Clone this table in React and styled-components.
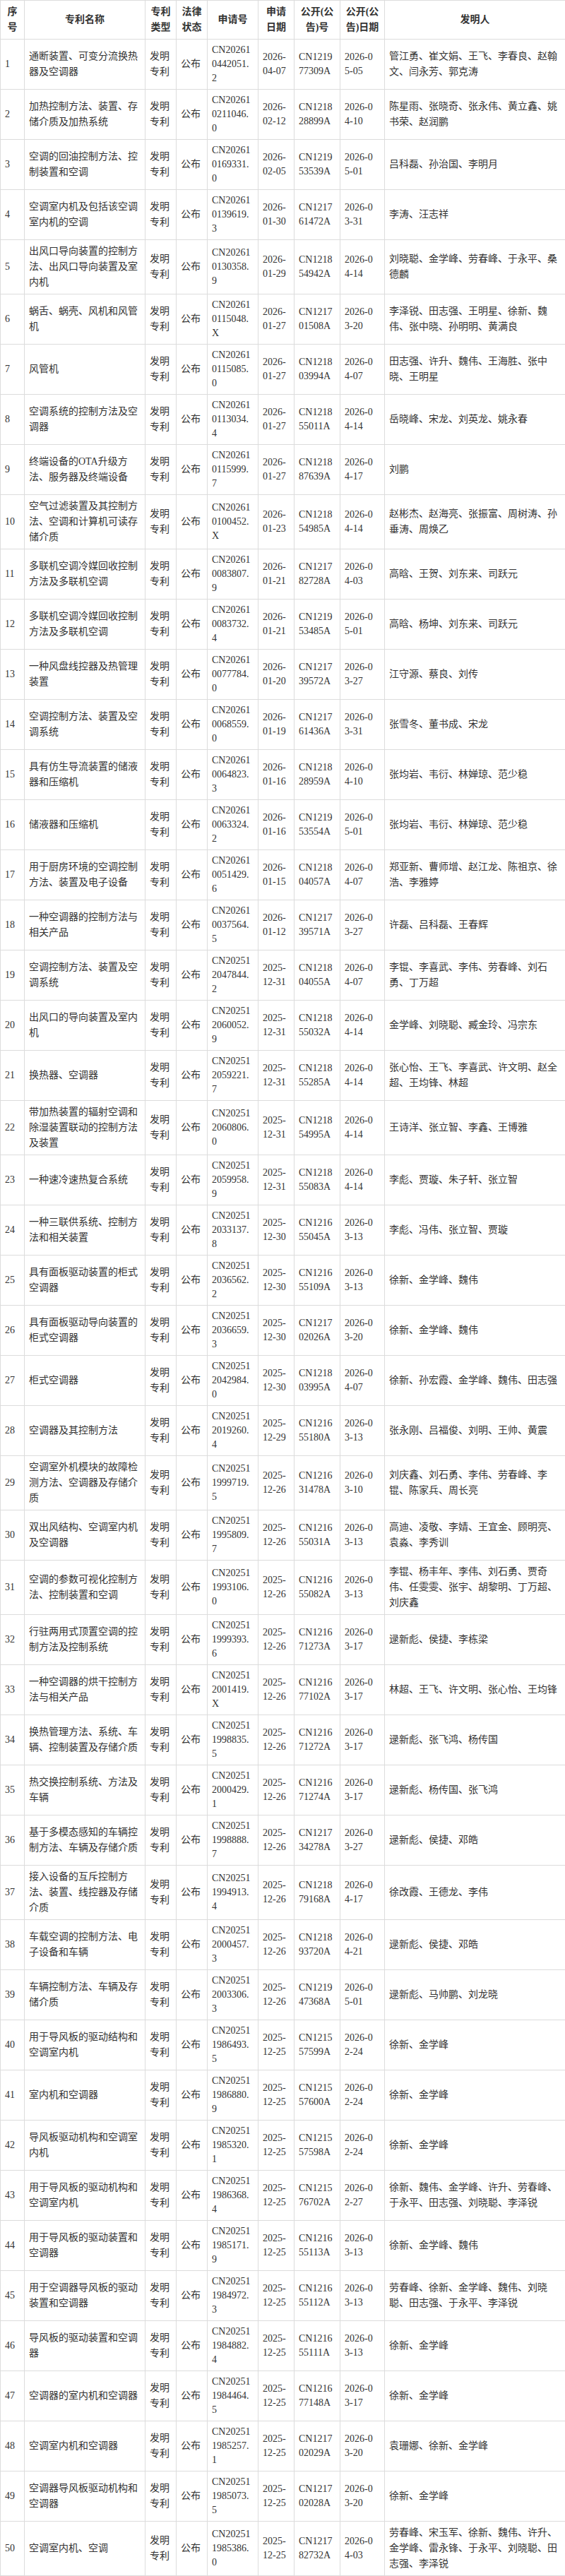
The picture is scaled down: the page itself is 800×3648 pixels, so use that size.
import React from 'react';
import styled, { createGlobalStyle } from 'styled-components';

const GlobalStyle = createGlobalStyle`
  body {
    margin: 0;
    background: #fff;
    color: #333;
    font-family: "Liberation Serif", "Noto Sans CJK SC", serif;
    font-size: 14px;
  }
`;

const Table = styled.table`
  width: 800px;
  border-collapse: collapse;
  table-layout: fixed;
`;

const HeadCell = styled.th`
  border: 1px solid #dcdcdc;
  padding: 5px 6px;
  font-weight: bold;
  line-height: 22px;
  text-align: center;
  vertical-align: middle;
  color: #333;
`;

const Cell = styled.td`
  border: 1px solid #dcdcdc;
  padding: 5px 6px;
  line-height: ${props => (props.$latin ? '20px' : '22px')};
  text-align: left;
  vertical-align: middle;
  color: #333;
`;

const Line = styled.span`
  display: block;
  white-space: nowrap;
`;

const columns = [
  { title: '序号', width: 34 },
  { title: '专利名称', width: 171 },
  { title: '专利类型', width: 44 },
  { title: '法律状态', width: 44 },
  { title: '申请号', width: 72 },
  { title: '申请日期', width: 51 },
  { title: '公开(公告)号', width: 65 },
  { title: '公开(公告)日期', width: 63 },
  { title: '发明人', width: 256 },
];

// [名称, 申请号, 申请日, 公开号, 公开日, 发明人]
const patents = [
  ['通断装置、可变分流换热器及空调器', 'CN202610442051.2', '2026-04-07', 'CN121977309A', '2026-05-05', '管江勇、崔文娟、王飞、李春良、赵翰文、闫永芳、郭克涛'],
  ['加热控制方法、装置、存储介质及加热系统', 'CN202610211046.0', '2026-02-12', 'CN121828899A', '2026-04-10', '陈星雨、张晓奇、张永伟、黄立鑫、姚书荣、赵润鹏'],
  ['空调的回油控制方法、控制装置和空调', 'CN202610169331.0', '2026-02-05', 'CN121953539A', '2026-05-01', '吕科磊、孙治国、李明月'],
  ['空调室内机及包括该空调室内机的空调', 'CN202610139619.3', '2026-01-30', 'CN121761472A', '2026-03-31', '李涛、汪志祥'],
  ['出风口导向装置的控制方法、出风口导向装置及室内机', 'CN202610130358.9', '2026-01-29', 'CN121854942A', '2026-04-14', '刘晓聪、金学峰、劳春峰、于永平、桑德麟'],
  ['蜗舌、蜗壳、风机和风管机', 'CN202610115048.X', '2026-01-27', 'CN121701508A', '2026-03-20', '李泽锐、田志强、王明星、徐新、魏伟、张中晓、孙明明、黄满良'],
  ['风管机', 'CN202610115085.0', '2026-01-27', 'CN121803994A', '2026-04-07', '田志强、许升、魏伟、王海胜、张中晓、王明星'],
  ['空调系统的控制方法及空调器', 'CN202610113034.4', '2026-01-27', 'CN121855011A', '2026-04-14', '岳晓峰、宋龙、刘英龙、姚永春'],
  ['终端设备的OTA升级方法、服务器及终端设备', 'CN202610115999.7', '2026-01-27', 'CN121887639A', '2026-04-17', '刘鹏'],
  ['空气过滤装置及其控制方法、空调和计算机可读存储介质', 'CN202610100452.X', '2026-01-23', 'CN121854985A', '2026-04-14', '赵彬杰、赵海亮、张振富、周树涛、孙垂涛、周焕乙'],
  ['多联机空调冷媒回收控制方法及多联机空调', 'CN202610083807.9', '2026-01-21', 'CN121782728A', '2026-04-03', '高晗、王贺、刘东来、司跃元'],
  ['多联机空调冷媒回收控制方法及多联机空调', 'CN202610083732.4', '2026-01-21', 'CN121953485A', '2026-05-01', '高晗、杨坤、刘东来、司跃元'],
  ['一种风盘线控器及热管理装置', 'CN202610077784.0', '2026-01-20', 'CN121739572A', '2026-03-27', '江守源、蔡良、刘传'],
  ['空调控制方法、装置及空调系统', 'CN202610068559.0', '2026-01-19', 'CN121761436A', '2026-03-31', '张雪冬、董书成、宋龙'],
  ['具有仿生导流装置的储液器和压缩机', 'CN202610064823.3', '2026-01-16', 'CN121828959A', '2026-04-10', '张均岩、韦衍、林婵琼、范少稳'],
  ['储液器和压缩机', 'CN202610063324.2', '2026-01-16', 'CN121953554A', '2026-05-01', '张均岩、韦衍、林婵琼、范少稳'],
  ['用于厨房环境的空调控制方法、装置及电子设备', 'CN202610051429.6', '2026-01-15', 'CN121804057A', '2026-04-07', '郑亚新、曹师增、赵江龙、陈祖京、徐浩、李雅婷'],
  ['一种空调器的控制方法与相关产品', 'CN202610037564.5', '2026-01-12', 'CN121739571A', '2026-03-27', '许磊、吕科磊、王春辉'],
  ['空调控制方法、装置及空调系统', 'CN202512047844.2', '2025-12-31', 'CN121804055A', '2026-04-07', '李锟、李喜武、李伟、劳春峰、刘石勇、丁万超'],
  ['出风口的导向装置及室内机', 'CN202512060052.9', '2025-12-31', 'CN121855032A', '2026-04-14', '金学峰、刘晓聪、臧金玲、冯宗东'],
  ['换热器、空调器', 'CN202512059221.7', '2025-12-31', 'CN121855285A', '2026-04-14', '张心怡、王飞、李喜武、许文明、赵全超、王均锋、林超'],
  ['带加热装置的辐射空调和除湿装置联动的控制方法及装置', 'CN202512060806.0', '2025-12-31', 'CN121854995A', '2026-04-14', '王诗洋、张立智、李鑫、王博雅'],
  ['一种速冷速热复合系统', 'CN202512059958.9', '2025-12-31', 'CN121855083A', '2026-04-14', '李彪、贾璇、朱子轩、张立智'],
  ['一种三联供系统、控制方法和相关装置', 'CN202512033137.8', '2025-12-30', 'CN121655045A', '2026-03-13', '李彪、冯伟、张立智、贾璇'],
  ['具有面板驱动装置的柜式空调器', 'CN202512036562.2', '2025-12-30', 'CN121655109A', '2026-03-13', '徐新、金学峰、魏伟'],
  ['具有面板驱动导向装置的柜式空调器', 'CN202512036659.3', '2025-12-30', 'CN121702026A', '2026-03-20', '徐新、金学峰、魏伟'],
  ['柜式空调器', 'CN202512042984.0', '2025-12-30', 'CN121803995A', '2026-04-07', '徐新、孙宏霞、金学峰、魏伟、田志强'],
  ['空调器及其控制方法', 'CN202512019260.4', '2025-12-29', 'CN121655180A', '2026-03-13', '张永刚、吕福俊、刘明、王帅、黄震'],
  ['空调室外机模块的故障检测方法、空调器及存储介质', 'CN202511999719.5', '2025-12-26', 'CN121631478A', '2026-03-10', '刘庆鑫、刘石勇、李伟、劳春峰、李锟、陈家兵、周长亮'],
  ['双出风结构、空调室内机及空调器', 'CN202511995809.7', '2025-12-26', 'CN121655031A', '2026-03-13', '高迪、凌敬、李婧、王宜金、顾明亮、袁淼、李秀训'],
  ['空调的参数可视化控制方法、控制装置和空调', 'CN202511993106.0', '2025-12-26', 'CN121655082A', '2026-03-13', '李锟、杨丰年、李伟、刘石勇、贾奇伟、任雯雯、张宇、胡黎明、丁万超、刘庆鑫'],
  ['行驻两用式顶置空调的控制方法及控制系统', 'CN202511999393.6', '2025-12-26', 'CN121671273A', '2026-03-17', '逯新彪、侯捷、李栋梁'],
  ['一种空调器的烘干控制方法与相关产品', 'CN202512001419.X', '2025-12-26', 'CN121677102A', '2026-03-17', '林超、王飞、许文明、张心怡、王均锋'],
  ['换热管理方法、系统、车辆、控制装置及存储介质', 'CN202511998835.5', '2025-12-26', 'CN121671272A', '2026-03-17', '逯新彪、张飞鸿、杨传国'],
  ['热交换控制系统、方法及车辆', 'CN202512000429.1', '2025-12-26', 'CN121671274A', '2026-03-17', '逯新彪、杨传国、张飞鸿'],
  ['基于多模态感知的车辆控制方法、车辆及存储介质', 'CN202511998888.7', '2025-12-26', 'CN121734278A', '2026-03-27', '逯新彪、侯捷、邓皓'],
  ['接入设备的互斥控制方法、装置、线控器及存储介质', 'CN202511994913.4', '2025-12-26', 'CN121879168A', '2026-04-17', '徐改霞、王德龙、李伟'],
  ['车载空调的控制方法、电子设备和车辆', 'CN202512000457.3', '2025-12-26', 'CN121893720A', '2026-04-21', '逯新彪、侯捷、邓皓'],
  ['车辆控制方法、车辆及存储介质', 'CN202512003306.3', '2025-12-26', 'CN121947368A', '2026-05-01', '逯新彪、马帅鹏、刘龙晓'],
  ['用于导风板的驱动结构和空调室内机', 'CN202511986493.5', '2025-12-25', 'CN121557599A', '2026-02-24', '徐新、金学峰'],
  ['室内机和空调器', 'CN202511986880.9', '2025-12-25', 'CN121557600A', '2026-02-24', '徐新、金学峰'],
  ['导风板驱动机构和空调室内机', 'CN202511985320.1', '2025-12-25', 'CN121557598A', '2026-02-24', '徐新、金学峰'],
  ['用于导风板的驱动机构和空调室内机', 'CN202511986368.4', '2025-12-25', 'CN121576702A', '2026-02-27', '徐新、魏伟、金学峰、许升、劳春峰、于永平、田志强、刘晓聪、李泽锐'],
  ['用于导风板的驱动装置和空调器', 'CN202511985171.9', '2025-12-25', 'CN121655113A', '2026-03-13', '徐新、金学峰、魏伟'],
  ['用于空调器导风板的驱动装置和空调器', 'CN202511984972.3', '2025-12-25', 'CN121655112A', '2026-03-13', '劳春峰、徐新、金学峰、魏伟、刘晓聪、田志强、于永平、李泽锐'],
  ['导风板的驱动装置和空调器', 'CN202511984882.4', '2025-12-25', 'CN121655111A', '2026-03-13', '徐新、金学峰'],
  ['空调器的室内机和空调器', 'CN202511984464.5', '2025-12-25', 'CN121677148A', '2026-03-17', '徐新、金学峰'],
  ['空调室内机和空调器', 'CN202511985257.1', '2025-12-25', 'CN121702029A', '2026-03-20', '袁珊娜、徐新、金学峰'],
  ['空调器导风板驱动机构和空调器', 'CN202511985073.5', '2025-12-25', 'CN121702028A', '2026-03-20', '徐新、金学峰'],
  ['空调室内机、空调', 'CN202511985386.0', '2025-12-25', 'CN121782732A', '2026-04-03', '劳春峰、宋玉军、徐新、魏伟、许升、金学峰、雷永锋、于永平、刘晓聪、田志强、李泽锐'],
];

// cut a code into the same pieces the narrow columns wrap it into
const chunk = (text, sizes) => {
  const parts = [];
  let pos = 0;
  sizes.forEach(size => {
    if (pos < text.length) {
      parts.push(text.slice(pos, pos + size));
      pos += size;
    }
  });
  if (pos < text.length) parts.push(text.slice(pos));
  return parts.map((part, i) => <Line key={i}>{part}</Line>);
};

const PatentRow = ({ index, item }) => {
  const [name, appNo, appDate, pubNo, pubDate, inventors] = item;
  return (
    <tr>
      <Cell $latin>{index}</Cell>
      <Cell>{name}</Cell>
      <Cell>发明专利</Cell>
      <Cell>公布</Cell>
      <Cell $latin>{chunk(appNo, [7, 8])}</Cell>
      <Cell $latin>{chunk(appDate, [5])}</Cell>
      <Cell $latin>{chunk(pubNo, [6])}</Cell>
      <Cell $latin>{chunk(pubDate, [6])}</Cell>
      <Cell>{inventors}</Cell>
    </tr>
  );
};

export default function App() {
  return (
    <>
      <GlobalStyle />
      <Table>
        <colgroup>
          {columns.map(col => (
            <col key={col.title} style={{ width: col.width }} />
          ))}
        </colgroup>
        <thead>
          <tr>
            {columns.map(col => (
              <HeadCell key={col.title}>{col.title}</HeadCell>
            ))}
          </tr>
        </thead>
        <tbody>
          {patents.map((item, i) => (
            <PatentRow key={item[1]} index={i + 1} item={item} />
          ))}
        </tbody>
      </Table>
    </>
  );
}
